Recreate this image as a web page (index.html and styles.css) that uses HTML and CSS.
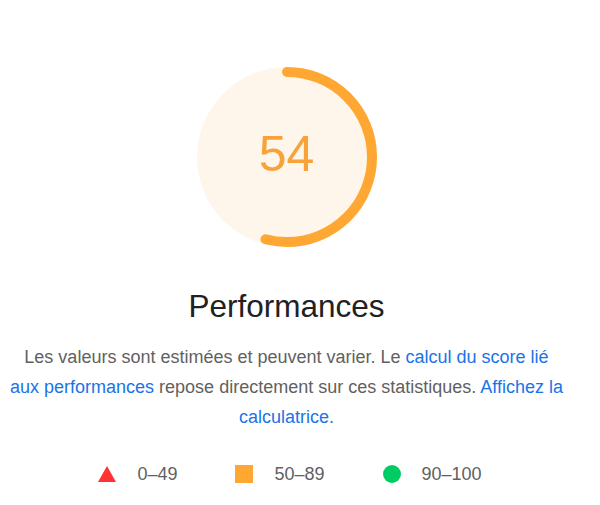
FILE: index.html
```html
<!DOCTYPE html>
<html lang="fr">
<head>
<meta charset="utf-8">
<title>Performances</title>
<link rel="stylesheet" href="styles.css">
</head>
<body>
<div class="report">
  <div class="gauge">
    <svg class="gauge-svg" viewBox="0 0 180 180" width="180" height="180">
      <circle class="gauge-base" cx="90" cy="90" r="90"></circle>
      <circle class="gauge-arc" cx="90" cy="90" r="85" transform="rotate(-90 90 90)"></circle>
    </svg>
    <span class="gauge-value">54</span>
  </div>
  <h2 class="title">Performances</h2>
  <p class="desc">Les valeurs sont estimées et peuvent varier. Le <a href="#">calcul du score lié aux performances</a> repose directement sur ces statistiques. <a href="#">Affichez la calculatrice.</a></p>
  <div class="legend">
    <div class="legend-item">
      <svg class="icon" viewBox="0 0 18 18" width="18" height="18"><polygon points="9,1 18,17 0,17" fill="#f33"></polygon></svg>
      <span>0–49</span>
    </div>
    <div class="legend-item">
      <span class="sq"></span>
      <span>50–89</span>
    </div>
    <div class="legend-item">
      <span class="dot"></span>
      <span>90–100</span>
    </div>
  </div>
</div>
</body>
</html>
```
FILE: styles.css
```css
html, body {
  background: #ffffff;
}
body {
  margin: 8px;
  font-family: "Liberation Sans", Arial, Helvetica, sans-serif;
}
.report {
  width: 557px;
  display: flex;
  flex-direction: column;
  align-items: center;
}
.gauge {
  margin-top: 59px;
  width: 180px;
  height: 180px;
  display: grid;
  place-items: center;
}
.gauge-svg {
  grid-area: 1 / 1;
  display: block;
}
.gauge-base {
  fill: #fff6eb;
}
.gauge-arc {
  fill: none;
  stroke: #ffa733;
  stroke-width: 10;
  stroke-linecap: round;
  stroke-dasharray: 288.4 534.1;
}
.gauge-value {
  grid-area: 1 / 1;
  font-size: 50px;
  line-height: 50px;
  color: #f7a33a;
  margin-bottom: 6px;
}
.title {
  margin: 41px 0 0;
  font-size: 31.5px;
  line-height: 36px;
  font-weight: normal;
  color: #212121;
}
.desc {
  margin: 18px 0 0;
  width: 557px;
  font-size: 18px;
  line-height: 30px;
  color: #616161;
  text-align: center;
}
.desc a {
  color: #1a73e8;
  text-decoration: none;
}
.legend {
  margin-top: 27px;
  display: flex;
  gap: 58px;
  padding-left: 7px;
  font-size: 18px;
  line-height: 30px;
  color: #616161;
}
.legend-item {
  display: flex;
  align-items: center;
  gap: 21px;
}
.icon {
  display: block;
}
.sq {
  width: 18px;
  height: 18px;
  background: #ffa733;
}
.dot {
  width: 18px;
  height: 18px;
  border-radius: 50%;
  background: #0c6;
}
```
